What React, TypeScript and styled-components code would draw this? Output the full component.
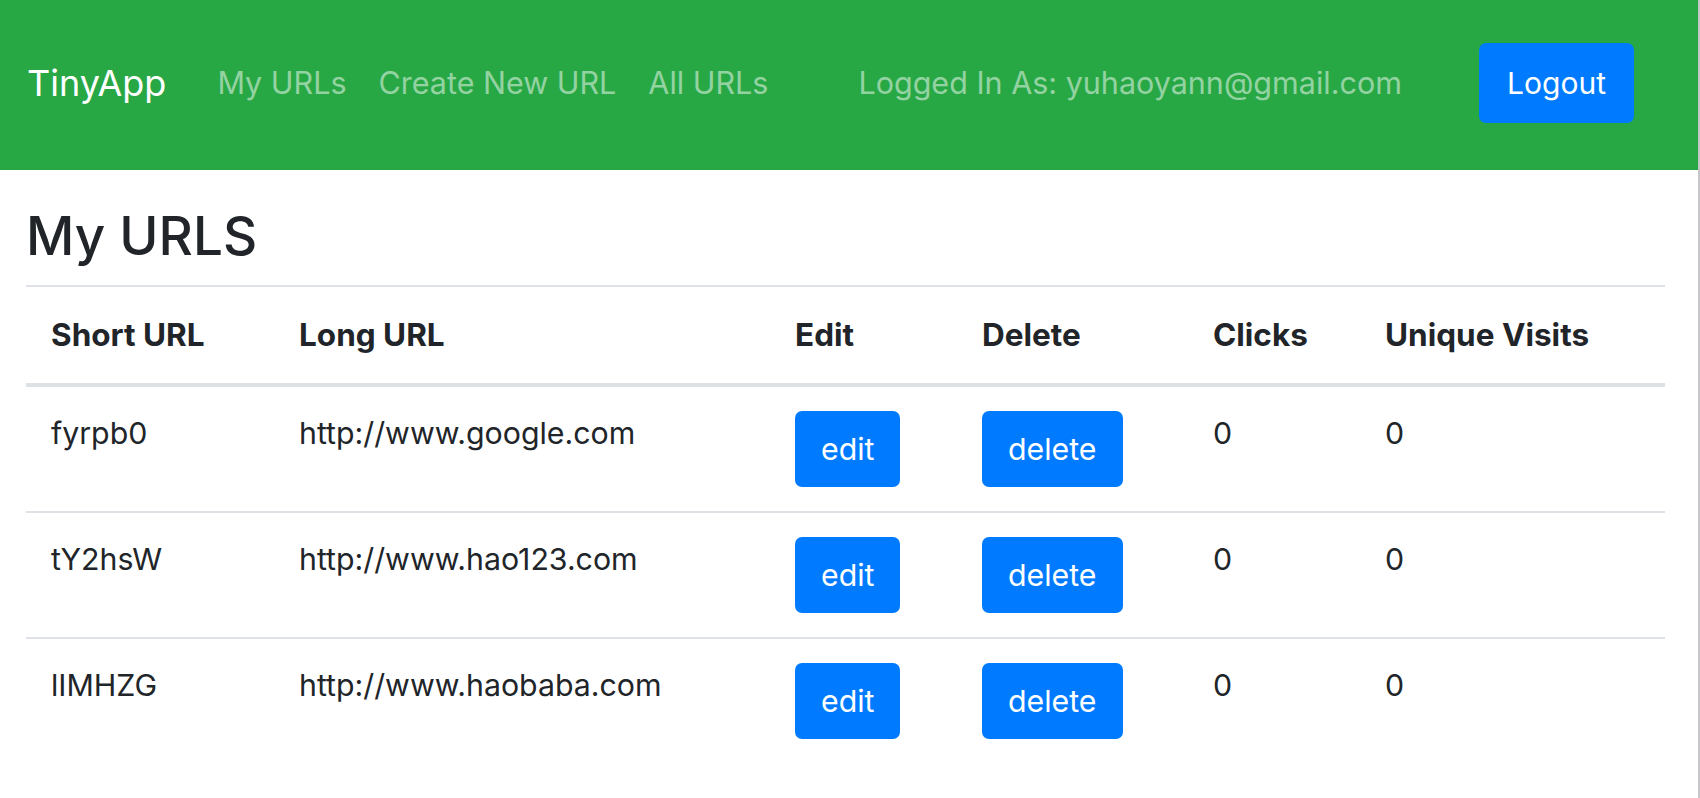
import React from "react";
import styled, { createGlobalStyle } from "styled-components";

const GlobalStyle = createGlobalStyle`
  html, body {
    margin: 0;
    padding: 0;
    background: #ffffff;
  }
  body {
    font-family: Inter, "Noto Sans", "Liberation Sans", sans-serif;
    color: #212529;
    font-size: 30.3px;
    line-height: 1.5;
  }
  * { box-sizing: border-box; }
`;

const Page = styled.div`
  min-height: 100vh;
  border-right: 2px solid #c7c7cb;
`;

const Navbar = styled.nav`
  height: 170px;
  background: #28a745;
  display: flex;
  align-items: center;
  padding: 0 64px 5px 27px;
`;

const Brand = styled.a`
  color: #ffffff;
  font-size: 36px;
  line-height: 1.5;
  text-decoration: none;
  margin-right: 35px;
`;

const NavList = styled.ul`
  display: flex;
  list-style: none;
  margin: 0;
  padding: 0;
`;

const NavLink = styled.a`
  display: block;
  padding: 0 16px;
  color: rgba(255, 255, 255, 0.5);
  text-decoration: none;
  font-size: 30.5px;
  line-height: 1.5;
`;

const UserText = styled.span`
  margin-left: 74px;
  color: rgba(255, 255, 255, 0.5);
  font-size: 30.5px;
  line-height: 1.5;
`;

const Button = styled.button<{ $size?: "nav" | "row" }>`
  display: inline-flex;
  align-items: center;
  justify-content: center;
  background: #007bff;
  color: #ffffff;
  border: none;
  border-radius: 7px;
  font-family: inherit;
  font-size: ${(p) => (p.$size === "nav" ? 30 : 30.3)}px;
  padding: 0 ${(p) => (p.$size === "nav" ? 28 : 26)}px;
  height: ${(p) => (p.$size === "nav" ? 80 : 76)}px;
  cursor: pointer;
`;

const LogoutButton = styled(Button)`
  margin-left: auto;
`;

const Main = styled.main`
  padding: 0 33px 0 26px;
`;

const Heading = styled.h1`
  font-size: 53px;
  font-weight: 500;
  line-height: 1.2;
  margin: 35px 0 16px;
`;

const Table = styled.table`
  width: 100%;
  border-collapse: collapse;
  table-layout: fixed;
`;

const HeadCell = styled.th`
  text-align: left;
  font-weight: 700;
  font-size: 31.5px;
  line-height: 48px;
  padding: 24px 25px;
  border-top: 2px solid #dee2e6;
  border-bottom: 4px solid #dee2e6;
  vertical-align: bottom;
`;

const Cell = styled.td`
  padding: 24px 25px;
  border-top: 2px solid #dee2e6;
  vertical-align: top;
  line-height: 45px;
`;

const BodyRow = styled.tr`
  &:first-child td {
    border-top: none;
  }
`;

const widths = [248, 496, 187, 231, 172, 305];

const rows = [
  { short: "fyrpb0", long: "http://www.google.com" },
  { short: "tY2hsW", long: "http://www.hao123.com" },
  { short: "lIMHZG", long: "http://www.haobaba.com" },
];

export default function App() {
  return (
    <>
      <GlobalStyle />
      <Page>
        <Navbar>
          <Brand href="#">TinyApp</Brand>
          <NavList>
            <li>
              <NavLink href="#">My URLs</NavLink>
            </li>
            <li>
              <NavLink href="#">Create New URL</NavLink>
            </li>
            <li>
              <NavLink href="#">All URLs</NavLink>
            </li>
          </NavList>
          <UserText>Logged In As: yuhaoyann@gmail.com</UserText>
          <LogoutButton $size="nav">Logout</LogoutButton>
        </Navbar>
        <Main>
          <Heading>My URLS</Heading>
          <Table>
            <colgroup>
              {widths.map((w, i) => (
                <col key={i} style={{ width: w }} />
              ))}
            </colgroup>
            <thead>
              <tr>
                <HeadCell>Short URL</HeadCell>
                <HeadCell>Long URL</HeadCell>
                <HeadCell>Edit</HeadCell>
                <HeadCell>Delete</HeadCell>
                <HeadCell>Clicks</HeadCell>
                <HeadCell>Unique Visits</HeadCell>
              </tr>
            </thead>
            <tbody>
              {rows.map((r) => (
                <BodyRow key={r.short}>
                  <Cell>{r.short}</Cell>
                  <Cell>{r.long}</Cell>
                  <Cell>
                    <Button $size="row">edit</Button>
                  </Cell>
                  <Cell>
                    <Button $size="row">delete</Button>
                  </Cell>
                  <Cell>0</Cell>
                  <Cell>0</Cell>
                </BodyRow>
              ))}
            </tbody>
          </Table>
        </Main>
      </Page>
    </>
  );
}
